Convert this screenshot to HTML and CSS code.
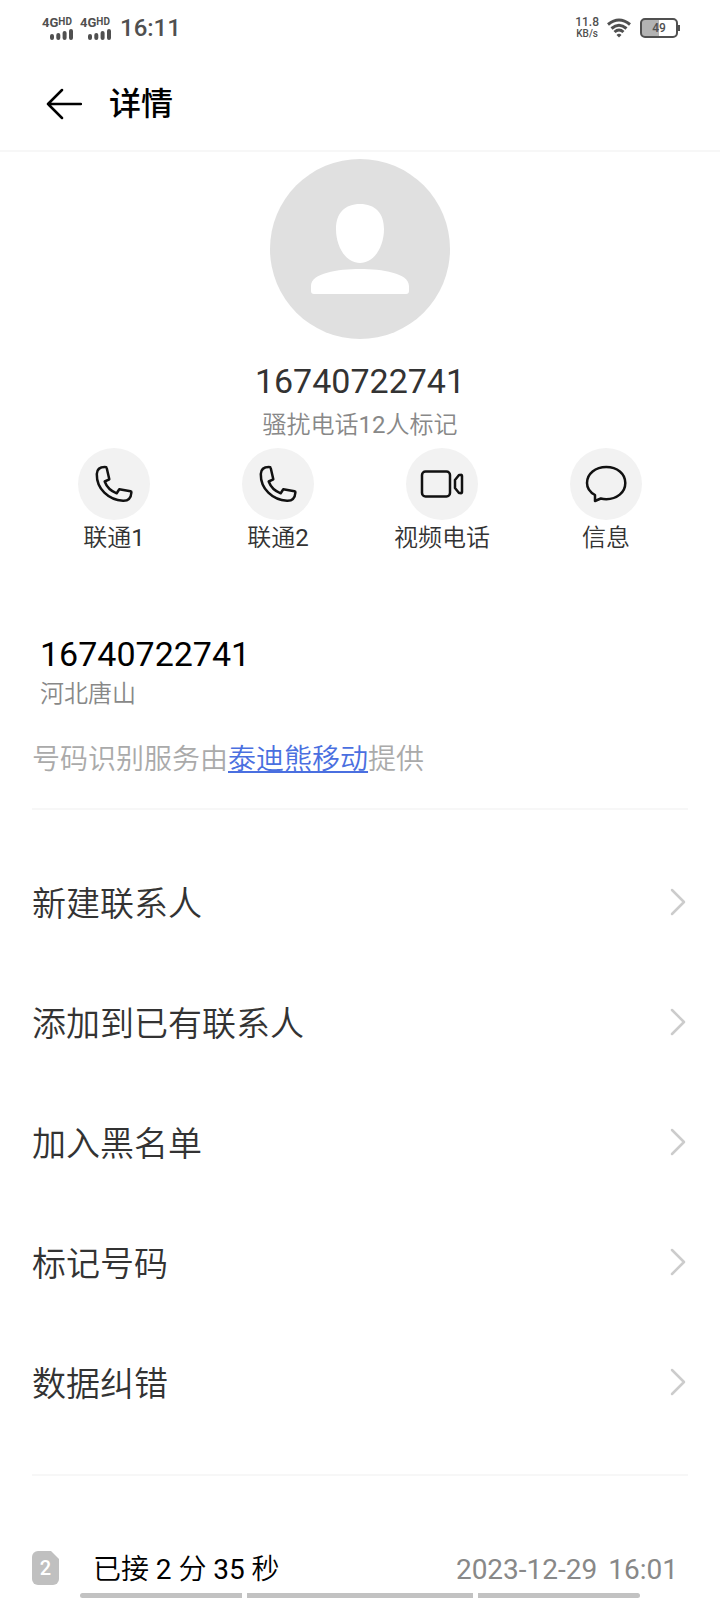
FILE: index.html
```html
<!DOCTYPE html>
<html lang="zh-CN">
<head>
	<meta charset="UTF-8">
	<meta name="viewport" content="width=device-width, initial-scale=1">
	<title>详情</title>
	<link rel="stylesheet" href="styles.css">
</head>
<body>
	<!-- 状态栏 -->
	<div class="status">
		<div class="sim">
			<span class="net">4G<small>HD</small></span>
			<svg class="signal" width="24" height="11" viewBox="0 0 24 11"><path d="M2 7v2M8.3 6v3M14.6 4v5M21 2v7"/></svg>
		</div>
		<div class="sim">
			<span class="net">4G<small>HD</small></span>
			<svg class="signal" width="24" height="11" viewBox="0 0 24 11"><path d="M2 7v2M8.3 6v3M14.6 4v5M21 2v7"/></svg>
		</div>
		<span class="time">16:11</span>
		<div class="speed"><span>11.8</span><small>KB/s</small></div>
		<svg class="wifi" width="24" height="20" viewBox="0 0 24 20"><path d="M1 6.5Q12-2.500 23 6.500M4.500 10.500Q12 4 19.500 10.500M7.500 14Q12 10 16.500 14"/><path class="dot" d="M9.500 17Q12 14.500 14.500 17L12 19.500z"/></svg>
		<div class="battery"><span>49</span></div>
	</div>

	<div class="header">
		<button class="back" type="button" aria-label="返回">
			<svg width="36" height="32" viewBox="0 0 36 32"><path d="M16 2L2 16l14 14M2 16h33"/></svg>
		</button>
		<h1>详情</h1>
	</div>

	<div class="profile">
		<svg class="avatar" width="180" height="180" viewBox="0 0 180 180">
			<circle cx="90" cy="90" r="90"/>
			<path d="M90 45c15 0 24 9 24 25 0 18-10 34-24 34S66 88 66 70c0-16 9-25 24-25zM90 110c22 0 49 4 49 17v5q0 3-3 3H44q-3 0-3-3v-5c0-13 27-17 49-17z"/>
		</svg>
		<p class="name">16740722741</p>
		<p class="mark">骚扰电话<b>12</b>人标记</p>
	</div>

	<div class="actions">
		<button type="button">
			<span class="icon"><svg width="44" height="44" viewBox="0 0 44 44"><path d="M4.800 12C5 7 8 4.800 13.500 5q1 0 1.200 1l2.600 11.300-4.600 2.200c2 5.500 6 9.500 12 11.800l2.600-4 11.200 2q1 .2.900 1.200C39 36 36.500 39 31 38.800 16.500 38 4.500 27 4.800 12z"/></svg></span>
			联通<b>1</b>
		</button>
		<button type="button">
			<span class="icon"><svg width="44" height="44" viewBox="0 0 44 44"><path d="M4.800 12C5 7 8 4.800 13.500 5q1 0 1.200 1l2.600 11.300-4.600 2.200c2 5.500 6 9.500 12 11.800l2.600-4 11.200 2q1 .2.900 1.200C39 36 36.500 39 31 38.800 16.500 38 4.500 27 4.800 12z"/></svg></span>
			联通<b>2</b>
		</button>
		<button type="button">
			<span class="icon"><svg width="44" height="44" viewBox="0 0 44 44"><rect x="2" y="9.500" width="28" height="25" rx="3.500"/><path d="M42 14v16q0 1.500-1.500 1H39l-4-5v-8l4-5h1.500q1.500-.5 1.500 1z"/></svg></span>
			视频电话
		</button>
		<button type="button">
			<span class="icon"><svg width="44" height="44" viewBox="0 0 44 44"><path d="M11 39v-6C5.500 30 3 26 3 21 3 11.500 11.500 5 22.300 5s19 6.500 19 16-8.500 16.200-19 16.200q-3 0-5.500-.7z"/></svg></span>
			信息
		</button>
	</div>

	<div class="number">
		<p class="num">16740722741</p>
		<p class="area">河北唐山</p>
	</div>
	<p class="provider">号码识别服务由<a href="#">泰迪熊移动</a>提供</p>

	<ul class="menu">
		<li><a href="#"><span>新建联系人</span><svg width="16" height="28" viewBox="0 0 16 28"><path d="M2 2l12 12L2 26"/></svg></a></li>
		<li><a href="#"><span>添加到已有联系人</span><svg width="16" height="28" viewBox="0 0 16 28"><path d="M2 2l12 12L2 26"/></svg></a></li>
		<li><a href="#"><span>加入黑名单</span><svg width="16" height="28" viewBox="0 0 16 28"><path d="M2 2l12 12L2 26"/></svg></a></li>
		<li><a href="#"><span>标记号码</span><svg width="16" height="28" viewBox="0 0 16 28"><path d="M2 2l12 12L2 26"/></svg></a></li>
		<li><a href="#"><span>数据纠错</span><svg width="16" height="28" viewBox="0 0 16 28"><path d="M2 2l12 12L2 26"/></svg></a></li>
	</ul>

	<!-- 通话记录 -->
	<div class="record">
		<span class="card">2</span>
		<span class="duration">已接 <b>2</b> 分 <b>35</b> 秒</span>
		<span class="date"><span>2023-12-29</span> <span>16:01</span></span>
	</div>

	<!-- 底部手势条 -->
	<div class="gesture"><i></i><i></i><i></i></div>
</body>
</html>
```
FILE: styles.css
```css
*{
	margin: 0;
	padding: 0;
	box-sizing: border-box;
}
body{
	background: #fff;
	color: #333;
	font-family: Roboto, "Noto Sans CJK SC", sans-serif;
}
ul{
	list-style: none;
}
/* 中文用细一点的字重,数字保持常规 */
b{
	font-weight: 400;
}
svg{
	display: block;
	fill: none;
	stroke-linecap: round;
	stroke-linejoin: round;
}
button{
	border: none;
	background: none;
	color: inherit;
	font: inherit;
	cursor: pointer;
}

/* 状态栏 */
.status{
	display: flex;
	align-items: center;
	height: 56px;
	padding: 0 42px;
	color: #505050;
	font-weight: 500;
}
.sim{
	width: 38px;
}
.net{
	display: flex;
	font-size: 13px;
	line-height: 12px;
	font-weight: 700;
}
.net small{
	font-size: 10px;
	line-height: 9px;
}
.signal{
	margin-left: 8px;
	stroke: #505050;
	stroke-width: 4;
}
.time{
	margin-left: 2px;
	font-size: 24px;
}
.speed{
	margin-left: auto;
	text-align: center;
}
.speed span,
.speed small{
	display: block;
	font-size: 12px;
	line-height: 11px;
}
.speed small{
	font-size: 10px;
}
.wifi{
	margin: 0 9px 0 8px;
	stroke: #505050;
	stroke-width: 3;
	stroke-linecap: butt;
}
.wifi .dot{
	fill: #505050;
	stroke: none;
}
.battery{
	position: relative;
	width: 38px;
	height: 20px;
	border: 2px solid #505050;
	border-radius: 5px;
	background: linear-gradient(to right, #b3b3b3 50%, #fff 50%);
	font-size: 12px;
	line-height: 16px;
	text-align: center;
}
.battery::after{
	content: "";
	position: absolute;
	top: 5px;
	right: -4px;
	width: 2px;
	height: 6px;
	background: #505050;
}

.header{
	display: flex;
	align-items: center;
	height: 96px;
	padding: 2px 0 0 46px;
	border-bottom: 2px solid #f7f7f7;
	color: #000;
}
.header h1{
	margin-left: 27px;
	font-size: 32px;
	line-height: 40px;
	font-weight: 500;
}
.back svg{
	stroke: #000;
	stroke-width: 2.5;
}

/* 头像和号码 */
.profile{
	padding-top: 7px;
	text-align: center;
}
.avatar{
	margin: 0 auto 22px;
}
.avatar circle{
	fill: #e0e0e0;
}
.avatar path{
	fill: #fff;
}
.name,
.num{
	font-size: 34px;
	line-height: 40px;
}
.mark{
	margin: 8px 0 7px;
	color: #888;
	font-size: 24px;
	line-height: 32px;
}
.actions{
	display: grid;
	grid-template-columns: repeat(4, 1fr);
	margin: 0 32px;
}
.actions button{
	font-size: 24px;
	line-height: 36px;
}
.icon{
	display: flex;
	align-items: center;
	justify-content: center;
	width: 72px;
	height: 72px;
	margin: 0 auto;
	border-radius: 50%;
	background: #f2f2f2;
}
.icon svg{
	stroke: #111;
	stroke-width: 2.5;
}

.number{
	margin: 78px 40px 0;
}
.num{
	color: #000;
}
.area{
	color: #888;
	font-size: 24px;
	line-height: 40px;
}
.provider{
	margin: 0 32px;
	padding: 26px 0 28px;
	border-bottom: 2px solid #f7f7f7;
	color: #aaa;
	font-size: 28px;
	line-height: 40px;
}
.provider a{
	color: #4a6fe0;
	text-underline-offset: 2px;
}
.mark,
.actions,
.area,
.provider,
.menu,
.duration{
	font-weight: 350;
}

/* 操作列表 */
.menu{
	margin: 0 32px;
	padding: 32px 0;
	border-bottom: 2px solid #f7f7f7;
}
.menu a{
	display: flex;
	align-items: center;
	justify-content: space-between;
	height: 120px;
	color: #333;
	font-size: 34px;
	text-decoration: none;
}
.menu span{
	padding-bottom: 2px;
}
.menu svg{
	margin-right: 2px;
	stroke: #ccc;
	stroke-width: 2.5;
}

.record{
	display: flex;
	align-items: center;
	margin: 68px 42px 0 32px;
	height: 48px;
	font-size: 28px;
	line-height: 40px;
}
.card{
	width: 27px;
	height: 34px;
	border-radius: 6px;
	background: #c0c0c0;
	clip-path: polygon(0 0, 19px 0, 100% 8px, 100% 100%, 0 100%);
	color: #fff;
	font-size: 20px;
	line-height: 34px;
	font-weight: 500;
	text-align: center;
}
.duration,
.date{
	padding-top: 3px;
}
.duration{
	margin-left: 34px;
	color: #000;
}
.date{
	display: flex;
	gap: 11px;
	margin-left: auto;
	color: #888;
}

.gesture{
	position: fixed;
	left: 80px;
	right: 80px;
	bottom: 2px;
	display: grid;
	grid-template-columns: 5fr 7fr 5fr;
	gap: 5px;
	height: 5px;
}
.gesture i{
	background: #c2c2c2;
}
.gesture i:first-child{
	border-radius: 3px 0 0 3px;
}
.gesture i:last-child{
	border-radius: 0 3px 3px 0;
}
```
